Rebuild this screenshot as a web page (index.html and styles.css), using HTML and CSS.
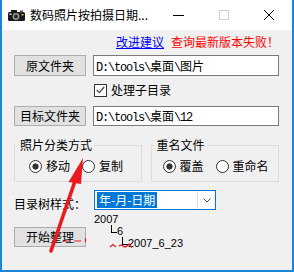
FILE: index.html
```html
<!DOCTYPE html>
<html lang="zh-CN">
<head>
  <meta charset="UTF-8">
  <title>数码照片按拍摄日期整理</title>
  <link rel="stylesheet" href="styles.css">
</head>
<body>
  <div class="window">
    <!-- Title bar -->
    <div class="titlebar">
      <svg class="app-icon" viewBox="0 0 17 12" width="17" height="12">
        <rect x="0" y="3" width="17" height="9" rx="1.5" fill="#1a1a1a"/>
        <rect x="3" y="1" width="6" height="3" fill="#1a1a1a"/>
        <rect x="12" y="1.5" width="3" height="2" fill="#555"/>
        <circle cx="8" cy="7.5" r="3.4" fill="#9a9a9a"/>
        <circle cx="8" cy="7.5" r="2" fill="#2a2a2a"/>
        <rect x="1.5" y="4.5" width="2" height="1.5" fill="#d9d9d9"/>
        <rect x="13.5" y="5" width="2" height="1.5" fill="#e0b030"/>
      </svg>
      <span class="title">数码照片按拍摄日期...</span>
      <div class="controls">
        <span class="ctl"><svg width="11" height="10" viewBox="0 0 11 10"><path d="M0 5.5H11" stroke="#000"/></svg></span>
        <span class="ctl"><svg width="10" height="10" viewBox="0 0 10 10"><rect x="0.5" y="0.5" width="9" height="9" fill="none" stroke="#cccccc"/></svg></span>
        <span class="ctl"><svg width="10" height="10" viewBox="0 0 10 10"><path d="M0 0L10 10M10 0L0 10" stroke="#000"/></svg></span>
      </div>
    </div>

    <div class="content">
      <div class="links">
        <a href="#">改进建议</a>
        <span class="err">查询最新版本失败！</span>
      </div>

      <div class="row">
        <button class="btn">原文件夹</button>
        <div class="path">D:\tools\<span class="cjk">桌面</span>\<span class="cjk">图片</span></div>
      </div>

      <label class="check">
        <span class="box"><svg width="9" height="8" viewBox="0 0 9 8"><path d="M0.8 4L3.3 6.6L8.2 1" fill="none" stroke="#444" stroke-width="1.3"/></svg></span>
        处理子目录
      </label>

      <div class="row row-2">
        <button class="btn">目标文件夹</button>
        <div class="path">D:\tools\<span class="cjk">桌面</span>\12</div>
      </div>

      <div class="groups">
        <fieldset class="group group-left">
          <legend>照片分类方式</legend>
          <div class="opts">
            <label class="radio on"><span class="dot"></span>移动</label>
            <label class="radio"><span class="dot"></span>复制</label>
          </div>
        </fieldset>
        <fieldset class="group group-right">
          <legend>重名文件</legend>
          <div class="opts">
            <label class="radio on"><span class="dot"></span>覆盖</label>
            <label class="radio"><span class="dot"></span>重命名</label>
          </div>
        </fieldset>
      </div>

      <div class="tree-style">
        <span class="lbl">目录树样式：</span>
        <div class="combo">
          <div class="val"><span class="sel">年-月-日期</span></div>
          <div class="drop"><svg width="8" height="5" viewBox="0 0 8 5"><path d="M0.5 0.5L4 4L7.5 0.5" fill="none" stroke="#444"/></svg></div>
        </div>
      </div>

      <div class="bottom">
        <button class="btn">开始整理</button>
        <div class="tree">
          <div>2007</div>
          <div class="l2"><i class="elbow"></i>6</div>
          <div class="l3"><i class="elbow"></i>2007_6_23</div>
        </div>
      </div>
    </div>

    <!-- red annotation arrow drawn over the window -->
    <svg class="arrow" viewBox="0 0 294 272" width="294" height="272">
      <line x1="75" y1="181" x2="51" y2="251" stroke="#ea1a1f" stroke-width="3.6" stroke-linecap="round"/>
      <polygon points="83,158 68.5,182 81,184" fill="#ea1a1f"/>
      <path d="M63 241H70M74 241H81M85.5 238V242" stroke="#ea1a1f" stroke-width="1.2"/>
      <path d="M110 247L113 244.5L116 247M119 246Q121 244 123 246Q125 248 127 246L129 244L132 248" fill="none" stroke="#ea1a1f" stroke-width="1.2"/>
    </svg>
  </div>
</body>
</html>
```

FILE: styles.css
```css
body {
  margin: 0;
  font: 12px/16px "Noto Sans CJK SC", sans-serif;
  color: #000;
}

.window {
  position: relative;
  width: 294px;
  height: 272px;
  box-sizing: border-box;
  border: 2px solid #1a86d9;
  border-top: 0;
  background: #f0f0f0;
  overflow: hidden;
}

/* title bar */
.titlebar {
  height: 30px;
  background: #fff;
  display: flex;
  align-items: center;
}

.app-icon {
  margin-left: 6px;
}

.title {
  margin-left: 5px;
}

.controls {
  margin-left: auto;
  margin-right: 1px;
  display: flex;
}

.ctl {
  width: 45px;
  height: 30px;
  display: flex;
  align-items: center;
  justify-content: center;
}

/* body */
.content {
  padding: 4px 13px 0 12px;
}

.links {
  display: flex;
  justify-content: flex-end;
  gap: 7px;
}

.links a {
  color: #0000ff;
  text-decoration: underline;
}

.err {
  color: #ff0000;
}

.row {
  display: flex;
  gap: 7px;
  height: 21px;
  margin-top: 5px;
}

.row-2 {
  height: 20px;
  margin-top: 9px;
}

.btn {
  width: 72px;
  height: 100%;
  padding: 0;
  border: 1px solid #adadad;
  background: #e1e1e1;
  font: 12px/16px "Noto Sans CJK SC", sans-serif;
  color: #000;
}

.path {
  flex: 1;
  box-sizing: border-box;
  border: 1px solid #7a7a7a;
  background: #fff;
  padding-left: 2px;
  font: 12px/19px "Liberation Mono", monospace;
  letter-spacing: -1.2px;
  white-space: nowrap;
}

.row-2 .path {
  line-height: 18px;
}

.path .cjk {
  font-family: "Noto Sans CJK SC", sans-serif;
  letter-spacing: 0;
}

.check {
  display: flex;
  align-items: center;
  gap: 4px;
  height: 14px;
  line-height: 14px;
  margin: 7px 0 0 80px;
}

.box {
  width: 13px;
  height: 13px;
  box-sizing: border-box;
  border: 1px solid #333;
  background: #fff;
  display: flex;
  align-items: center;
  justify-content: center;
}

/* group boxes */
.groups {
  display: flex;
  gap: 9px;
  margin-top: 12px;
}

.group {
  margin: 0;
  padding: 0 3px;
  min-width: 0;
  border: 1px solid #dcdcdc;
  box-sizing: border-box;
}

.group-left {
  width: 128px;
}

.group-right {
  width: 129px;
}

.group legend {
  padding: 0 2px;
  line-height: 14px;
}

.opts {
  display: flex;
  align-items: center;
  height: 14px;
  margin: 7px 0 8px 11px;
  white-space: nowrap;
}

.group-right .opts {
  margin-left: 8px;
}

.radio {
  display: flex;
  align-items: center;
  flex-shrink: 0;
  gap: 4px;
  line-height: 14px;
  margin-right: 12px;
}

.radio:last-child {
  margin-right: 0;
}

.dot {
  width: 13px;
  height: 13px;
  flex-shrink: 0;
  box-sizing: border-box;
  border: 1px solid #333;
  border-radius: 50%;
  background: #fff;
}

.radio.on .dot {
  background: radial-gradient(circle, #333 0 2.8px, #fff 3.4px);
}

/* tree style */
.tree-style {
  display: flex;
  margin-top: 8px;
}

.tree-style .lbl {
  width: 80px;
  padding-top: 7px;
  line-height: 14px;
}

.combo {
  width: 122px;
  height: 20px;
  box-sizing: border-box;
  border: 1px solid #0078d7;
  background: #fff;
  display: flex;
}

.combo .val {
  flex: 1;
  padding: 1px 0 0 2px;
}

.sel {
  display: inline-block;
  padding: 0 2px;
  background: #0078d7;
  color: #fff;
  line-height: 16px;
}

.drop {
  width: 17px;
  border-left: 1px solid #cce4f7;
  display: flex;
  align-items: center;
  justify-content: center;
}

.bottom {
  display: flex;
  margin-top: 2px;
}

.bottom .btn {
  height: 20px;
  margin-top: 14px;
}

.tree {
  margin-left: 8px;
  font: 11px/12px "Liberation Sans", Arial, sans-serif;
}

.tree .l2 {
  padding-left: 17px;
}

.tree .l3 {
  padding-left: 28px;
}

.elbow {
  display: inline-block;
  width: 5px;
  height: 7px;
  border-left: 1px solid #000;
  border-bottom: 1px solid #000;
  vertical-align: 2px;
}

.arrow {
  position: absolute;
  left: -2px;
  top: 0;
  pointer-events: none;
}
```
